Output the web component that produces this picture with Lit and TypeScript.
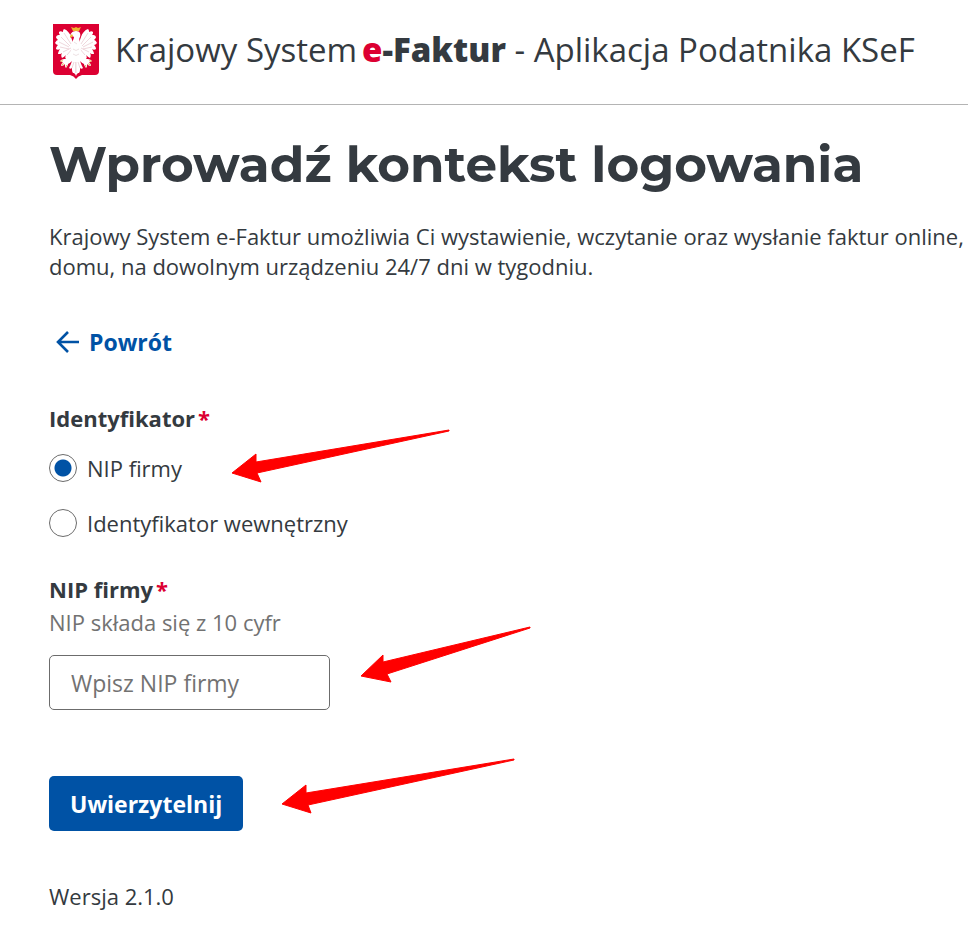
import { LitElement, html, css, svg } from "lit";
import { customElement, property, state } from "lit/decorators.js";

@customElement("eagle-crest")
class EagleCrest extends LitElement {
  static styles = css`
    :host { display: block; }
    .crest { display: block; width: 46px; height: 55px; }
  `;
  render() {
    const half = svg`
      <path fill="#fff" d="M22 22 C20 19 19 16 18 13 C17 9 14 6 11 5 C10 6 10 7 10 8 C8 7 7 7 6 8 C6 9 6 10 7 11 C5 11 4 11 3 13 C3 14 4 15 5 16 C4 16 3 17 2 19 C3 20 4 21 5 21 C4 22 3 23 3 25 C4 26 6 26 7 25 C6 27 5 28 5 30 C7 30 8 30 9 29 C8 31 8 32 9 34 C11 33 12 32 13 31 C12 33 12 34 13 35 C11 35 9 35 7 37 C8 38 9 38 10 38 C9 39 8 40 8 42 C10 42 11 41 12 40 C12 42 12 43 13 44 C14 43 15 41 15 40 C17 39 18 38 19 37 C18 40 17 42 16 44 C17 45 18 45 19 44 C19 46 19 48 20 49 C21 49 22 49 23 52 V18 Z"/>
      <path fill="none" stroke="#e2bcc4" stroke-width=".6" d="M11 9 L18 20 M8 13 L17 22 M6 18 L16 23 M7 23 L16 25 M10 28 L18 24 M14 31 L19 25 M21 38 L19 44 M23 38 V49"/>
      <path fill="#e3b552" d="M7 37 L10 36 L9 38 Z M8 42 L10 39 L11 40 Z M13 44 L13 41 L14 41 Z"/>`;
    return html`
      <svg class="crest" viewBox="0 0 46 55" role="img" aria-label="Godło Polski">
        <path fill="#dc0032" d="M0 0 H46 V47 Q46 51 42 51 H29 Q25 52 23 55 Q21 52 17 51 H4 Q0 51 0 47 Z"/>
        ${half}
        <g transform="translate(46 0) scale(-1 1)">${half}</g>
        <path fill="#fff" d="M19 22 C18 18 21 16 21 13 C20 12 19 12 17 13 C17 10 19 7 23 7 C27 7 28 10 27 13 C25 16 28 18 27 22 C29 28 28 34 23 38 C18 34 17 28 19 22 Z"/>
        <path fill="none" stroke="#e0cdd0" stroke-width=".6" d="M20 25 Q23 28 26 25 M20 30 Q23 33 26 30 M21 18 L24 20"/>
        <path fill="#efb52f" d="M18 3 L21 4 L23 3 L25 4 L28 3 L26 7 H20 Z M19 10 L17 12 L17 14 L20 12 Z"/>
      </svg>`;
  }
}

@customElement("pointer-arrow")
class PointerArrow extends LitElement {
  @property({ type: Number }) width = 0;
  @property({ type: Number }) height = 0;
  @property() points = "";
  static styles = css`
    :host { display: block; pointer-events: none; }
    .arrow { display: block; }
    .shape { fill: #ff0000; stroke: #ff0000; stroke-width: 1; stroke-linejoin: round; }
  `;
  render() {
    return html`<svg class="arrow" width=${this.width} height=${this.height} aria-hidden="true">
      <polygon class="shape" points=${this.points}></polygon>
    </svg>`;
  }
}

@customElement("app-root")
class AppRoot extends LitElement {
  @state() kind = "nip";

  static styles = css`
    :host {
      display: block;
      overflow-x: hidden;
      background: #fff;
      color: #343a40;
      font: 22px/30px "Open Sans", "Noto Sans", sans-serif;
    }
    * { box-sizing: border-box; }
    .header {
      display: flex;
      align-items: flex-start;
      gap: 16px;
      padding: 24px 0 25px 53px;
      border-bottom: 1px solid #b4b4b4;
    }
    .brand { display: flex; margin: 0; font-size: 33px; line-height: 52px; white-space: pre; }
    .brand-name { margin: 0 0 0 5px; font-weight: 800; }
    .accent { color: #dc0032; }
    .main { padding: 30px 0 24px 49px; }
    .title {
      margin: 0 0 26px;
      font: 700 50px/60px Montserrat, Inter, sans-serif;
      white-space: nowrap;
    }
    .intro { margin: 0 0 46px; white-space: nowrap; }
    .back {
      display: inline-flex;
      align-items: center;
      gap: 10px;
      padding-left: 7px;
      color: #0052a5;
      font-size: 23px;
      font-weight: 700;
      text-decoration: none;
    }
    .back-icon { width: 23px; height: 22px; fill: none; stroke: currentColor; stroke-width: 2.6; }
    .group { margin: 44px 0 36px; padding: 0; border: 0; min-width: 0; }
    .label { display: block; padding: 0; font-weight: 700; }
    .star { margin-left: 3px; color: #dc0032; }
    .options { display: grid; justify-items: start; gap: 25px; padding-top: 20px; }
    .anchor { position: relative; width: fit-content; }
    .option { display: flex; align-items: center; gap: 10px; }
    .radio {
      appearance: none;
      width: 28px;
      height: 28px;
      margin: 0;
      border: 1px solid #6c6c6c;
      border-radius: 50%;
      background: #fff;
    }
    .radio:checked { background: radial-gradient(circle, #0052a5 8px, #fff 9px); }
    .hint { margin: 3px 0 18px; color: #727272; }
    .input {
      display: block;
      width: 281px;
      height: 55px;
      padding: 0 21px;
      border: 1px solid #6c6c6c;
      border-radius: 5px;
      background: #fff;
      color: inherit;
      font: inherit;
      font-size: 23px;
    }
    .input::placeholder { color: #727272; opacity: 1; }
    .submit {
      display: block;
      height: 55px;
      padding: 0 21px;
      border: 0;
      border-radius: 5px;
      background: #0052a5;
      color: #fff;
      font: inherit;
      font-size: 23px;
      font-weight: 700;
    }
    .action { margin-top: 66px; }
    .version { margin: 50px 0 0; }
    .pointer { position: absolute; left: 100%; }
    .pointer-option { bottom: 0; margin-left: 49px; }
    .pointer-input { bottom: 27px; margin-left: 30px; }
    .pointer-submit { bottom: 17px; margin-left: 38px; }
  `;

  private pick(e: Event) {
    this.kind = (e.target as HTMLInputElement).value;
  }

  private option(value: string, text: string) {
    return html`<label class="option">
      <input class="radio" type="radio" name="kind" value=${value}
        .checked=${this.kind === value} @change=${this.pick}><span>${text}</span>
    </label>`;
  }

  render() {
    return html`
      <header class="header">
        <eagle-crest></eagle-crest>
        <p class="brand"><span>Krajowy System</span><strong class="brand-name"><span class="accent">e</span>-Faktur</strong><span> - Aplikacja Podatnika KSeF</span></p>
      </header>
      <main class="main">
        <h1 class="title">Wprowadź kontekst logowania</h1>
        <p class="intro">Krajowy System e-Faktur umożliwia Ci wystawienie, wczytanie oraz wysłanie faktur online,<br>domu, na dowolnym urządzeniu 24/7 dni w tygodniu.</p>
        <a class="back" href="#">
          <svg class="back-icon" viewBox="0 0 23 22" aria-hidden="true"><path d="M23 11 H2 M12 1 L2 11 L12 21"/></svg>
          <span>Powrót</span>
        </a>
        <form @submit=${(e: Event) => e.preventDefault()}>
          <fieldset class="group">
            <legend class="label">Identyfikator<span class="star">*</span></legend>
            <div class="options">
              <div class="anchor">
                ${this.option("nip", "NIP firmy")}
                <pointer-arrow class="pointer pointer-option" width="219" height="54"
                  points="1,44 25,25 25,33 218,1 218,2 26,44 30,53"></pointer-arrow>
              </div>
              ${this.option("internal", "Identyfikator wewnętrzny")}
            </div>
          </fieldset>
          <label class="label" for="nip">NIP firmy<span class="star">*</span></label>
          <p class="hint" id="nip-hint">NIP składa się z 10 cyfr</p>
          <div class="anchor">
            <input class="input" id="nip" type="text" inputmode="numeric" placeholder="Wpisz NIP firmy" aria-describedby="nip-hint">
            <pointer-arrow class="pointer pointer-input" width="171" height="57"
              points="1,50 23,29 23,36 170,1 170,2 27,48 31,56"></pointer-arrow>
          </div>
          <div class="anchor action">
            <button class="submit" type="submit">Uwierzytelnij</button>
            <pointer-arrow class="pointer pointer-submit" width="234" height="56"
              points="1,46 25,27 25,35 233,1 233,2 27,47 30,55"></pointer-arrow>
          </div>
        </form>
        <p class="version">Wersja 2.1.0</p>
      </main>`;
  }
}
